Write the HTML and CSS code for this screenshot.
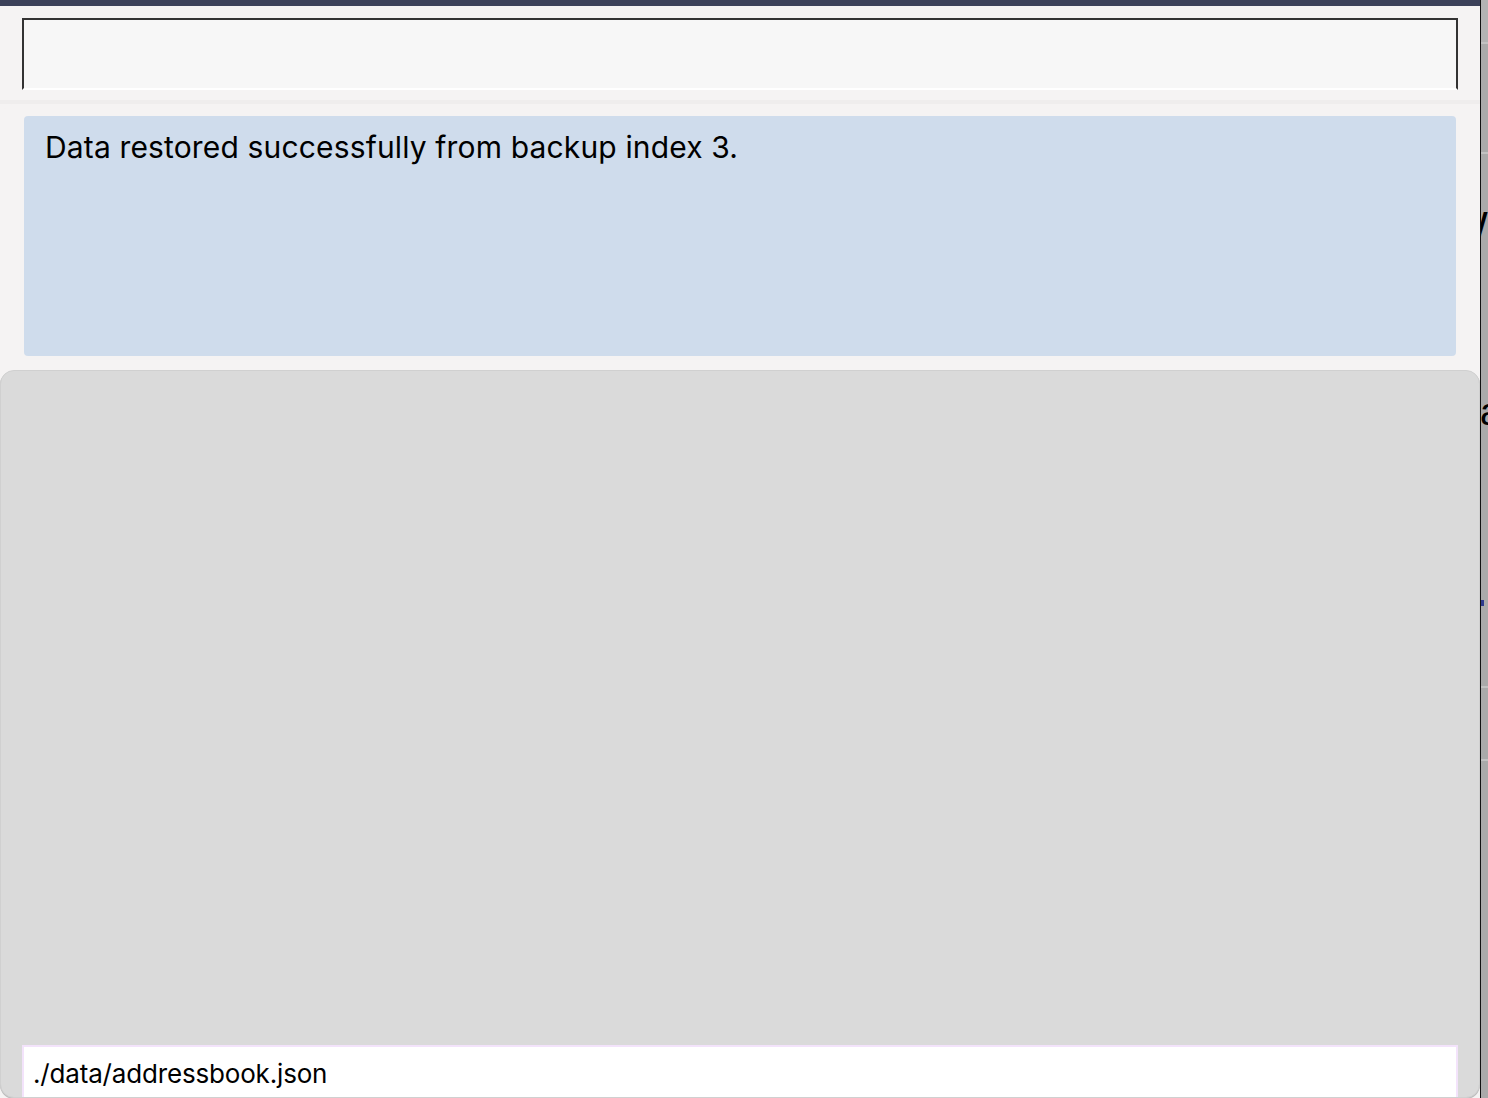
FILE: index.html
```html
<!DOCTYPE html>
<html>
<head>
<meta charset="utf-8">
<link rel="stylesheet" href="styles.css">
</head>
<body>
<div class="screen">
  <div class="window">
    <div class="titlebar"></div>
    <div class="top-pane">
      <div class="command-box"></div>
    </div>
    <div class="divider"></div>
    <div class="result-pane">
      <div class="result-box">Data restored successfully from backup index 3.</div>
    </div>
    <div class="list-pane">
      <div class="list-space"></div>
      <div class="status-bar">./data/addressbook.json</div>
    </div>
  </div>
  <div class="behind">
    <div class="bh-top"></div>
    <div class="bh-line"></div>
    <div class="bh-gap g1"></div>
    <div class="bh-line"></div>
    <div class="bh-gap g2"></div>
    <div class="bh-glyph glyph-w">W</div>
    <div class="bh-gap g3"></div>
    <div class="bh-glyph glyph-a">a</div>
    <div class="bh-gap g4"></div>
    <div class="bh-dot"></div>
    <div class="bh-gap g5"></div>
    <div class="bh-line"></div>
    <div class="bh-gap g6"></div>
    <div class="bh-line"></div>
  </div>
</div>
</body>
</html>
```

FILE: styles.css
```css
html, body {
  margin: 0;
  padding: 0;
  overflow: hidden;
  background: #acacac;
}

.screen {
  display: flex;
  width: 1488px;
  height: 1098px;
  overflow: hidden;
  font-family: Inter, "Noto Sans", sans-serif;
  color: #000;
}

.window {
  width: 1480px;
  flex: none;
  display: flex;
  flex-direction: column;
  background: #f5f3f3;
  border-right: 1px solid #111;
  overflow: hidden;
}

.titlebar {
  height: 6px;
  flex: none;
  background: #3c4159;
}

.top-pane {
  height: 94px;
  flex: none;
  padding: 12px 22px 0 22px;
  box-sizing: border-box;
}

.command-box {
  height: 72px;
  box-sizing: border-box;
  background: #f7f7f7;
  border: 2px solid #333;
  border-bottom-color: #ffffff;
}

.divider {
  height: 4px;
  flex: none;
  background: #efeded;
}

.result-pane {
  height: 266px;
  flex: none;
  box-sizing: border-box;
  padding: 12px 24px 14px 24px;
  border-radius: 16px 16px 0 0;
  background: #f5f3f3;
}

.result-box {
  height: 240px;
  box-sizing: border-box;
  background: #cfdcec;
  border-radius: 4px;
  padding: 13px 21px 12px 21px;
  font-size: 30px;
  line-height: 36px;
  letter-spacing: 0.15px;
}

.list-pane {
  flex: 1;
  display: flex;
  flex-direction: column;
  background: #dadada;
  border: 1px solid #d0d0d0;
  border-radius: 14px;
  box-shadow: 0 1px 0 #bdbdbd;
}

.list-space {
  flex: 1;
}

.status-bar {
  height: 52px;
  flex: none;
  margin: 0 21px 0 21px;
  box-sizing: border-box;
  background: #ffffff;
  border: 2px solid #f3e3fb;
  border-bottom: none;
  padding: 11px 9px 0 9px;
  font-size: 26px;
  line-height: 32px;
  letter-spacing: -0.17px;
}

.behind {
  flex: 1;
  display: flex;
  flex-direction: column;
  overflow: hidden;
  background: #aaaaaa;
}

.bh-top {
  height: 42px;
  background: #b3b3b3;
}

.bh-line {
  height: 2px;
  background: #c2c2c2;
}

.bh-gap.g1 { height: 108px; }
.bh-gap.g2 { height: 52px; }
.bh-gap.g3 { height: 146px; }
.bh-gap.g4 { height: 168px; }
.bh-gap.g5 { height: 80px; }
.bh-gap.g6 { height: 71px; }

.bh-glyph {
  font-family: "Liberation Sans", sans-serif;
  color: #000;
  white-space: nowrap;
  margin-left: -1px;
}

.glyph-w {
  height: 40px;
  font-size: 40px;
  line-height: 40px;
  margin-left: -31px;
}

.glyph-a {
  height: 40px;
  font-size: 38px;
  line-height: 40px;
}

.bh-dot {
  width: 3px;
  height: 6px;
  background: #2d3a8c;
}
```
